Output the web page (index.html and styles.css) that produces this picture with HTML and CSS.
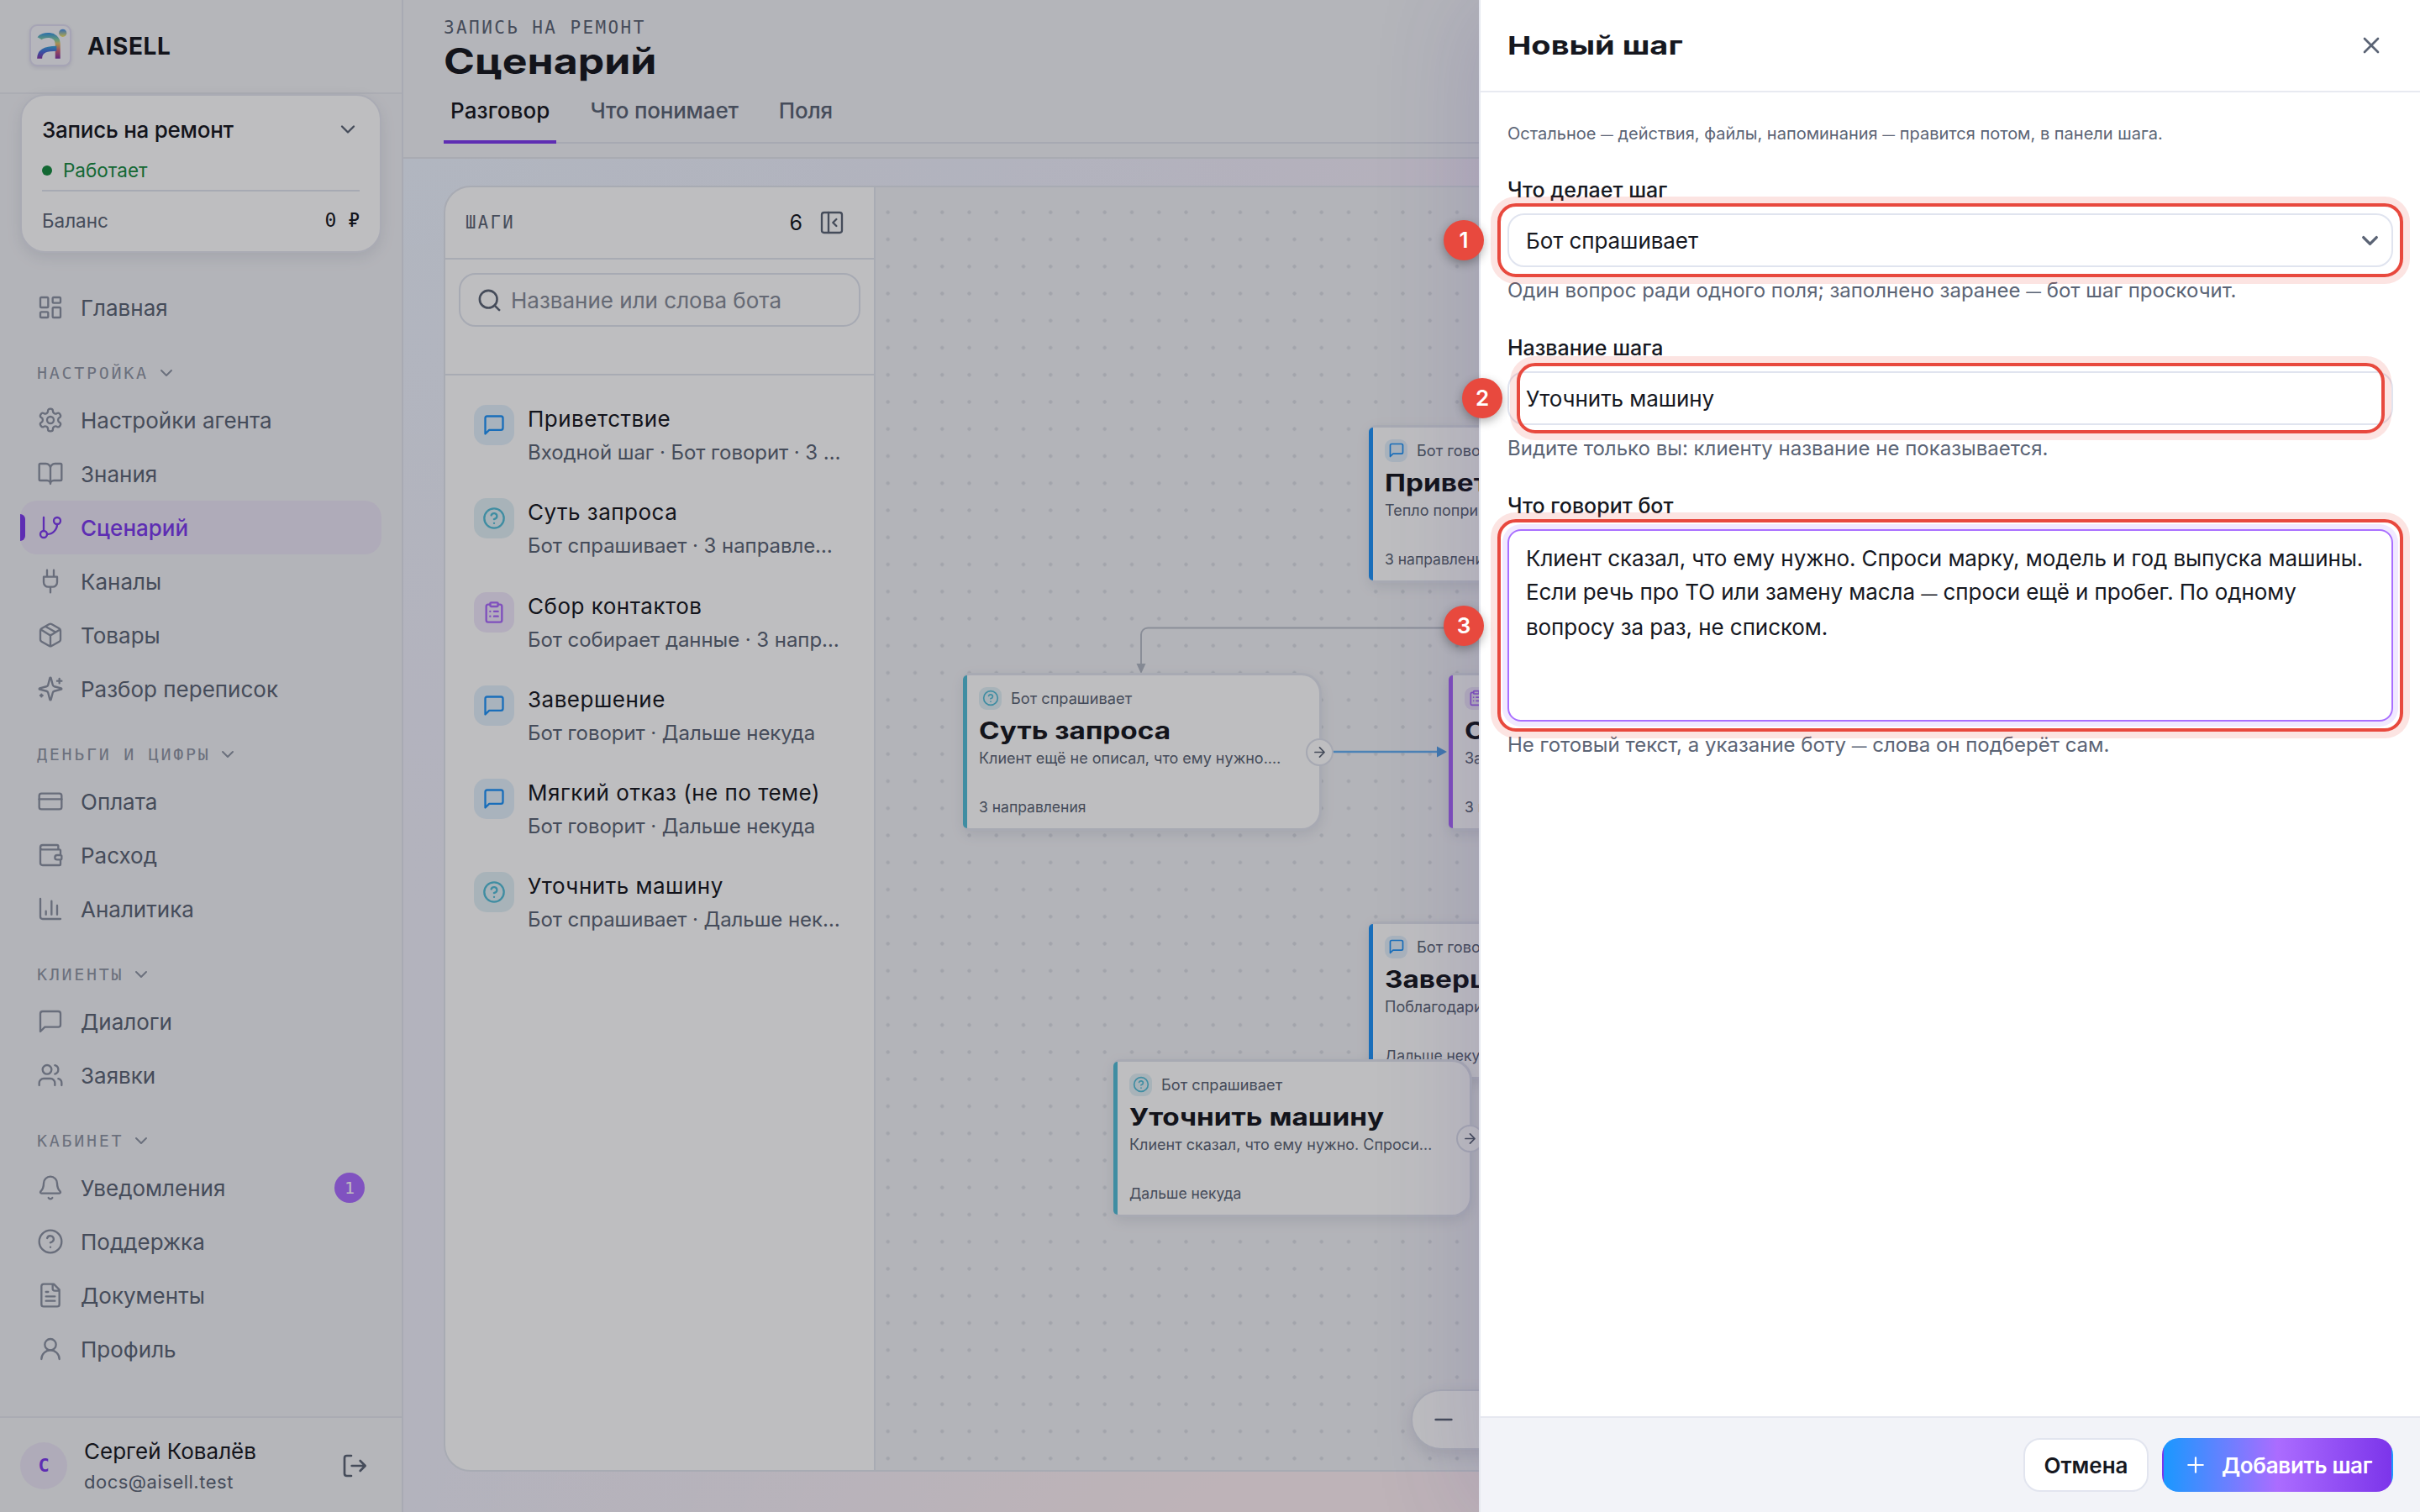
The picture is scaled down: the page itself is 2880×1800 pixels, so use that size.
FILE: index.html
```html
<!DOCTYPE html>
<html lang="ru">
<head>
<meta charset="utf-8">
<title>AISELL — Сценарий</title>
<link rel="stylesheet" href="styles.css">
</head>
<body>
<svg class="defs" width="0" height="0">
  <symbol id="i-home" viewBox="0 0 24 24"><rect x="3" y="3" width="7" height="9" rx="1"/><rect x="14" y="3" width="7" height="5" rx="1"/><rect x="14" y="12" width="7" height="9" rx="1"/><rect x="3" y="16" width="7" height="5" rx="1"/></symbol>
  <symbol id="i-gear" viewBox="0 0 24 24"><path d="M12.22 2h-.44a2 2 0 0 0-2 2v.18a2 2 0 0 1-1 1.73l-.43.25a2 2 0 0 1-2 0l-.15-.08a2 2 0 0 0-2.73.73l-.22.38a2 2 0 0 0 .73 2.73l.15.1a2 2 0 0 1 1 1.72v.51a2 2 0 0 1-1 1.74l-.15.09a2 2 0 0 0-.73 2.73l.22.38a2 2 0 0 0 2.73.73l.15-.08a2 2 0 0 1 2 0l.43.25a2 2 0 0 1 1 1.73V20a2 2 0 0 0 2 2h.44a2 2 0 0 0 2-2v-.18a2 2 0 0 1 1-1.73l.43-.25a2 2 0 0 1 2 0l.15.08a2 2 0 0 0 2.73-.73l.22-.39a2 2 0 0 0-.73-2.73l-.15-.08a2 2 0 0 1-1-1.74v-.5a2 2 0 0 1 1-1.74l.15-.09a2 2 0 0 0 .73-2.73l-.22-.38a2 2 0 0 0-2.73-.73l-.15.08a2 2 0 0 1-2 0l-.43-.25a2 2 0 0 1-1-1.73V4a2 2 0 0 0-2-2z"/><circle cx="12" cy="12" r="3"/></symbol>
  <symbol id="i-book" viewBox="0 0 24 24"><path d="M12 7v14M3 18a1 1 0 0 1-1-1V4a1 1 0 0 1 1-1h5a4 4 0 0 1 4 4 4 4 0 0 1 4-4h5a1 1 0 0 1 1 1v13a1 1 0 0 1-1 1h-6a3 3 0 0 0-3 3 3 3 0 0 0-3-3z"/></symbol>
  <symbol id="i-branch" viewBox="0 0 24 24"><path d="M6 3v12M18 9a9 9 0 0 1-9 9"/><circle cx="18" cy="6" r="3"/><circle cx="6" cy="18" r="3"/></symbol>
  <symbol id="i-plug" viewBox="0 0 24 24"><path d="M12 22v-5M9 8V2M15 8V2M18 8v5a4 4 0 0 1-4 4h-4a4 4 0 0 1-4-4V8Z"/></symbol>
  <symbol id="i-box" viewBox="0 0 24 24"><path d="M11 21.73a2 2 0 0 0 2 0l7-4A2 2 0 0 0 21 16V8a2 2 0 0 0-1-1.73l-7-4a2 2 0 0 0-2 0l-7 4A2 2 0 0 0 3 8v8a2 2 0 0 0 1 1.73zM12 22V12M3.3 7l7.703 4.734a2 2 0 0 0 1.994 0L20.7 7M7.5 4.27l9 5.15"/></symbol>
  <symbol id="i-spark" viewBox="0 0 24 24"><path d="M9.937 15.5A2 2 0 0 0 8.5 14.063l-6.135-1.582a.5.5 0 0 1 0-.962L8.5 9.936A2 2 0 0 0 9.937 8.5l1.582-6.135a.5.5 0 0 1 .963 0L14.063 8.5A2 2 0 0 0 15.5 9.937l6.135 1.581a.5.5 0 0 1 0 .964L15.5 14.063a2 2 0 0 0-1.437 1.437l-1.582 6.135a.5.5 0 0 1-.963 0zM20 3v4M22 5h-4M4 17v2M5 18H3"/></symbol>
  <symbol id="i-card" viewBox="0 0 24 24"><rect x="2" y="5" width="20" height="14" rx="2"/><path d="M2 10h20"/></symbol>
  <symbol id="i-wallet" viewBox="0 0 24 24"><path d="M19 7V4a1 1 0 0 0-1-1H5a2 2 0 0 0 0 4h15a1 1 0 0 1 1 1v4h-3a2 2 0 0 0 0 4h3a1 1 0 0 0 1-1v-2a1 1 0 0 0-1-1M3 5v14a2 2 0 0 0 2 2h15a1 1 0 0 0 1-1v-4"/></symbol>
  <symbol id="i-chart" viewBox="0 0 24 24"><path d="M3 3v16a2 2 0 0 0 2 2h16M18 17V9M13 17V5M8 17v-3"/></symbol>
  <symbol id="i-msg" viewBox="0 0 24 24"><path d="M21 15a2 2 0 0 1-2 2H7l-4 4V5a2 2 0 0 1 2-2h14a2 2 0 0 1 2 2z"/></symbol>
  <symbol id="i-users" viewBox="0 0 24 24"><path d="M16 21v-2a4 4 0 0 0-4-4H6a4 4 0 0 0-4 4v2M22 21v-2a4 4 0 0 0-3-3.87M16 3.13a4 4 0 0 1 0 7.75"/><circle cx="9" cy="7" r="4"/></symbol>
  <symbol id="i-bell" viewBox="0 0 24 24"><path d="M10.268 21a2 2 0 0 0 3.464 0M3.262 15.326A1 1 0 0 0 4 17h16a1 1 0 0 0 .74-1.673C19.41 13.956 18 12.499 18 8A6 6 0 0 0 6 8c0 4.499-1.411 5.956-2.738 7.326"/></symbol>
  <symbol id="i-help" viewBox="0 0 24 24"><circle cx="12" cy="12" r="10"/><path d="M9.09 9a3 3 0 0 1 5.83 1c0 2-3 3-3 3M12 17h.01"/></symbol>
  <symbol id="i-file" viewBox="0 0 24 24"><path d="M15 2H6a2 2 0 0 0-2 2v16a2 2 0 0 0 2 2h12a2 2 0 0 0 2-2V7ZM14 2v4a2 2 0 0 0 2 2h4M10 9H8M16 13H8M16 17H8"/></symbol>
  <symbol id="i-user" viewBox="0 0 24 24"><circle cx="12" cy="8" r="5"/><path d="M20 21a8 8 0 0 0-16 0"/></symbol>
  <symbol id="i-out" viewBox="0 0 24 24"><path d="M9 21H5a2 2 0 0 1-2-2V5a2 2 0 0 1 2-2h4M17 16.500l4.500-4.500-4.500-4.500M21 12H9.500"/></symbol>
  <symbol id="i-clip" viewBox="0 0 24 24"><rect x="8" y="2" width="8" height="4" rx="1"/><path d="M16 4h2a2 2 0 0 1 2 2v14a2 2 0 0 1-2 2H6a2 2 0 0 1-2-2V6a2 2 0 0 1 2-2h2M12 11h4M12 16h4M8 11h.01M8 16h.01"/></symbol>
  <symbol id="i-panel" viewBox="0 0 24 24"><rect x="3" y="3" width="18" height="18" rx="2"/><path d="M9 3v18M16 15l-3-3 3-3"/></symbol>
  <symbol id="i-search" viewBox="0 0 24 24"><circle cx="11" cy="11" r="8"/><path d="M21 21l-4.300-4.300"/></symbol>
  <symbol id="i-down" viewBox="0 0 24 24"><path d="M6 9l6 6 6-6"/></symbol>
  <symbol id="i-right" viewBox="0 0 24 24"><path d="M5 12h14M12 5l7 7-7 7"/></symbol>
  <symbol id="i-x" viewBox="0 0 24 24"><path d="M18 6L6 18M6 6l12 12"/></symbol>
  <symbol id="i-plus" viewBox="0 0 24 24"><path d="M5 12h14M12 5v14"/></symbol>
  <symbol id="i-minus" viewBox="0 0 24 24"><path d="M5 12h14"/></symbol>
</svg>

<div class="app">
  <aside class="sidebar">
    <div class="brand">
      <svg class="logo" viewBox="0 0 50 50">
        <defs><linearGradient id="lg" x1="0" y1="8" x2="0" y2="43" gradientUnits="userSpaceOnUse"><stop offset="0" stop-color="#2f8fe8"/><stop offset=".3" stop-color="#8ccf9a"/><stop offset=".42" stop-color="#e0c26a"/><stop offset=".7" stop-color="#c8607a"/><stop offset="1" stop-color="#7a2fa8"/></linearGradient>
        <linearGradient id="lg2" x1="0" y1="26" x2="0" y2="43" gradientUnits="userSpaceOnUse"><stop offset="0" stop-color="#3aa5d8"/><stop offset=".45" stop-color="#4a68d8"/><stop offset="1" stop-color="#8a2fa0"/></linearGradient>
        <linearGradient id="lg3" x1="0" y1="0" x2="0" y2="1"><stop offset="0" stop-color="#3d8df0"/><stop offset="1" stop-color="#f0e060"/></linearGradient></defs>
        <path d="M11 16C14 11 34 8 34.500 23V42" fill="none" stroke="url(#lg)" stroke-width="6.500"/>
        <path d="M11 42C11 31 21 29 33 29" fill="none" stroke="url(#lg2)" stroke-width="6.500"/>
        <circle cx="41" cy="9" r="5" fill="url(#lg3)"/>
      </svg>
      <span class="brand-name">AISELL</span>
    </div>
    <div class="agent">
      <div class="agent-row"><span class="agent-name">Запись на ремонт</span><svg class="ic agent-chev"><use href="#i-down"/></svg></div>
      <div class="agent-status"><i class="dot"></i><span>Работает</span></div>
      <div class="agent-balance"><span>Баланс</span><b class="mono">0 ₽</b></div>
    </div>
    <nav class="nav">
      <a class="item"><svg class="ic"><use href="#i-home"/></svg><span>Главная</span></a>
      <div class="group">НАСТРОЙКА<svg class="ic"><use href="#i-down"/></svg></div>
      <a class="item"><svg class="ic"><use href="#i-gear"/></svg><span>Настройки агента</span></a>
      <a class="item"><svg class="ic"><use href="#i-book"/></svg><span>Знания</span></a>
      <a class="item active"><svg class="ic"><use href="#i-branch"/></svg><span>Сценарий</span></a>
      <a class="item"><svg class="ic"><use href="#i-plug"/></svg><span>Каналы</span></a>
      <a class="item"><svg class="ic"><use href="#i-box"/></svg><span>Товары</span></a>
      <a class="item"><svg class="ic"><use href="#i-spark"/></svg><span>Разбор переписок</span></a>
      <div class="group">ДЕНЬГИ И ЦИФРЫ<svg class="ic"><use href="#i-down"/></svg></div>
      <a class="item"><svg class="ic"><use href="#i-card"/></svg><span>Оплата</span></a>
      <a class="item"><svg class="ic"><use href="#i-wallet"/></svg><span>Расход</span></a>
      <a class="item"><svg class="ic"><use href="#i-chart"/></svg><span>Аналитика</span></a>
      <div class="group">КЛИЕНТЫ<svg class="ic"><use href="#i-down"/></svg></div>
      <a class="item"><svg class="ic"><use href="#i-msg"/></svg><span>Диалоги</span></a>
      <a class="item"><svg class="ic"><use href="#i-users"/></svg><span>Заявки</span></a>
      <div class="group">КАБИНЕТ<svg class="ic"><use href="#i-down"/></svg></div>
      <a class="item"><svg class="ic"><use href="#i-bell"/></svg><span>Уведомления</span><em class="count">1</em></a>
      <a class="item"><svg class="ic"><use href="#i-help"/></svg><span>Поддержка</span></a>
      <a class="item"><svg class="ic"><use href="#i-file"/></svg><span>Документы</span></a>
      <a class="item"><svg class="ic"><use href="#i-user"/></svg><span>Профиль</span></a>
    </nav>
    <div class="account">
      <span class="avatar">С</span>
      <div class="who"><div class="who-name">Сергей Ковалёв</div><div class="who-mail">docs@aisell.test</div></div>
      <svg class="ic out"><use href="#i-out"/></svg>
    </div>
  </aside>

  <main class="main">
    <header class="head">
      <div class="crumb">ЗАПИСЬ НА РЕМОНТ</div>
      <h1 class="title"><span class="wide">Сценарий</span></h1>
      <div class="tabs"><a class="tab on">Разговор</a><a class="tab">Что понимает</a><a class="tab">Поля</a></div>
    </header>
    <section class="board">
      <div class="steps">
        <div class="steps-head"><span class="steps-title">ШАГИ</span><b class="steps-count">6</b><svg class="ic"><use href="#i-panel"/></svg></div>
        <div class="steps-search"><div class="search"><svg class="ic"><use href="#i-search"/></svg><span>Название или слова бота</span></div></div>
        <div class="list">
          <div class="step"><i class="tile say"><svg class="ic"><use href="#i-msg"/></svg></i><div><div class="step-name">Приветствие</div><div class="step-sub">Входной шаг · Бот говорит · 3 …</div></div></div>
          <div class="step"><i class="tile ask"><svg class="ic"><use href="#i-help"/></svg></i><div><div class="step-name">Суть запроса</div><div class="step-sub">Бот спрашивает · 3 направле…</div></div></div>
          <div class="step"><i class="tile form"><svg class="ic"><use href="#i-clip"/></svg></i><div><div class="step-name">Сбор контактов</div><div class="step-sub">Бот собирает данные · 3 напр…</div></div></div>
          <div class="step"><i class="tile say"><svg class="ic"><use href="#i-msg"/></svg></i><div><div class="step-name">Завершение</div><div class="step-sub">Бот говорит · Дальше некуда</div></div></div>
          <div class="step"><i class="tile say"><svg class="ic"><use href="#i-msg"/></svg></i><div><div class="step-name">Мягкий отказ (не по теме)</div><div class="step-sub">Бот говорит · Дальше некуда</div></div></div>
          <div class="step"><i class="tile ask"><svg class="ic"><use href="#i-help"/></svg></i><div><div class="step-name">Уточнить машину</div><div class="step-sub">Бот спрашивает · Дальше нек…</div></div></div>
        </div>
      </div>
      <div class="canvas">
        <svg class="edges" viewBox="0 0 800 1527">
          <path d="M720 524.500H324a8 8 0 0 0-8 8V568" fill="none" stroke="#b9bec9" stroke-width="2"/>
          <path d="M310.500 567h11l-5.500 12z" fill="#b2b8c4"/>
          <path d="M544 672h126" fill="none" stroke="#64aff2" stroke-width="2.500"/>
          <path d="M668 665.500v13l12-6.500z" fill="#559fe8"/>
        </svg>
        <article class="node say n1"><div class="node-kind"><i class="tile say"><svg class="ic"><use href="#i-msg"/></svg></i>Бот говорит</div><div class="node-name"><span class="wide">Приветствие</span></div><div class="node-text">Тепло поприветствуй</div><div class="node-foot">3 направления</div></article>
        <article class="node form n3"><div class="node-kind"><i class="tile form"><svg class="ic"><use href="#i-clip"/></svg></i>Бот</div><div class="node-name"><span class="wide">Сбор</span></div><div class="node-text">Запроси</div><div class="node-foot">3 пути</div></article>
        <article class="node ask n2"><div class="node-kind"><i class="tile ask"><svg class="ic"><use href="#i-help"/></svg></i>Бот спрашивает</div><div class="node-name"><span class="wide">Суть запроса</span></div><div class="node-text">Клиент ещё не описал, что ему нужно.…</div><div class="node-foot">3 направления</div><i class="port"><svg class="ic"><use href="#i-right"/></svg></i></article>
        <article class="node say n4"><div class="node-kind"><i class="tile say"><svg class="ic"><use href="#i-msg"/></svg></i>Бот говорит</div><div class="node-name"><span class="wide">Завершение</span></div><div class="node-text">Поблагодари клиента…</div><div class="node-foot">Дальше некуда</div></article>
        <article class="node ask n5"><div class="node-kind"><i class="tile ask"><svg class="ic"><use href="#i-help"/></svg></i>Бот спрашивает</div><div class="node-name"><span class="wide">Уточнить машину</span></div><div class="node-text">Клиент сказал, что ему нужно. Спроси…</div><div class="node-foot">Дальше некуда</div><i class="port"><svg class="ic"><use href="#i-right"/></svg></i></article>
        <div class="zoombar"><svg class="ic"><use href="#i-minus"/></svg></div>
      </div>
    </section>
  </main>
</div>

<div class="scrim"></div>

<div class="drawer">
  <div class="d-head"><h2 class="d-title"><span class="wide">Новый шаг</span></h2><svg class="ic"><use href="#i-x"/></svg></div>
  <div class="d-body">
    <p class="note">Остальное <span class="dash">—</span> действия, файлы, напоминания <span class="dash">—</span> правится потом, в панели шага.</p>
    <div class="field">
      <label class="label">Что делает шаг</label>
      <div class="control select"><span>Бот спрашивает</span><svg class="ic"><use href="#i-down"/></svg><i class="mark"></i><i class="num">1</i></div>
      <p class="hint">Один вопрос ради одного поля; заполнено заранее <span class="dash">—</span> бот шаг проскочит.</p>
    </div>
    <div class="field">
      <label class="label">Название шага</label>
      <div class="control"><span>Уточнить машину</span><i class="mark inner"></i><i class="num second">2</i></div>
      <p class="hint">Видите только вы: клиенту название не показывается.</p>
    </div>
    <div class="field">
      <label class="label">Что говорит бот</label>
      <div class="control area"><span>Клиент сказал, что ему нужно. Спроси марку, модель и год выпуска машины.<br>Если речь про ТО или замену масла <span class="dash">—</span> спроси ещё и пробег. По одному<br>вопросу за раз, не списком.</span><i class="mark"></i><i class="num third">3</i></div>
      <p class="hint">Не готовый текст, а указание боту <span class="dash">—</span> слова он подберёт сам.</p>
    </div>
  </div>
  <div class="d-foot"><a class="btn">Отмена</a><a class="btn primary"><svg class="ic"><use href="#i-plus"/></svg><span>Добавить шаг</span></a></div>
</div>
</body>
</html>
```
FILE: styles.css
```css
* { box-sizing: border-box; }
body { margin: 0; width: 2880px; height: 1800px; overflow: hidden; position: relative; font-family: Inter, "Noto Sans", sans-serif; font-size: 26px; color: #16181f; background: #f1f2f6; }
h1, h2, p { margin: 0; font-weight: inherit; }
i, em { font-style: normal; }
.defs { position: absolute; }
.ic { width: 32px; height: 32px; flex: none; fill: none; stroke: currentColor; stroke-width: 1.75; stroke-linecap: round; stroke-linejoin: round; }
.mono, .group, .crumb, .steps-title, .count, .avatar { font-family: "DejaVu Sans Mono", monospace; }
.wide { display: inline-block; transform-origin: 0 50%; transform: scaleX(1.19); white-space: nowrap; }
.dash { font-size: .74em; }

.app { display: flex; height: 1800px; }

/* Sidebar */
.sidebar { width: 480px; flex: none; display: flex; flex-direction: column; background: #f1f2f6; border-right: 2px solid #e2e4ed; }
.brand { height: 112px; flex: none; border-bottom: 2px solid #e6e8ee; display: flex; align-items: center; gap: 19px; padding: 0 0 2px 35px; background: #f3f4f7; }
.logo { width: 50px; height: 50px; border: 2px solid #dedcf0; border-radius: 9px; background: #f4f4fa; box-shadow: 0 2px 4px #dcdce8; }
.brand-name { font-size: 28px; font-weight: 700; letter-spacing: .6px; line-height: 40px; padding-top: 2px; }
.agent { margin: 0 24px; height: 189px; flex: none; border: 2px solid #e4e6ef; border-radius: 30px; background: #fff; padding: 22px 24px; box-shadow: 0 6px 18px rgba(40, 45, 80, .1); }
.agent-row { height: 36px; display: flex; align-items: center; justify-content: space-between; font-weight: 500; letter-spacing: -.25px; }
.agent-chev { width: 28px; height: 28px; color: #5b6475; stroke-width: 2; }
.agent-status { margin-top: 17px; height: 39px; padding-bottom: 10px; border-bottom: 2px solid #e0e4ee; display: flex; align-items: center; gap: 13px; color: #168a3f; font-size: 22.5px; }
.dot { width: 12px; height: 12px; border-radius: 50%; background: #168a3f; }
.agent-balance { margin-top: 19px; height: 30px; display: flex; align-items: center; justify-content: space-between; color: #5b6475; font-size: 22.5px; }
.agent-balance b { font-weight: 400; color: #16181f; font-size: 23px; }
.nav { margin-top: 33px; padding: 0 24px; flex: 1; }
.item { position: relative; height: 64px; display: flex; align-items: center; padding: 0 20px; gap: 20px; border-radius: 20px; color: #5b6475; }
.item .ic { color: #8a91a1; }
.item.active { background: #ebe6f6; color: #7c3aed; font-weight: 500; }
.item.active .ic { color: #7c3aed; }
.item.active::before { content: ""; position: absolute; left: 0; top: 16px; width: 6px; height: 32px; border-radius: 0 6px 6px 0; background: #7c3aed; }
.count { margin-left: auto; width: 36px; height: 36px; border-radius: 50%; background: #ab6cff; color: #fff; font-size: 20px; line-height: 36px; text-align: center; }
.group { height: 70px; padding: 22px 0 0 20px; display: flex; align-items: center; gap: 9px; font-size: 20px; letter-spacing: 2.7px; color: #8e95a4; }
.group .ic { width: 24px; height: 24px; stroke-width: 2; }
.account { height: 114px; flex: none; border-top: 2px solid #e4e6ed; background: #f3f4f7; display: flex; align-items: center; padding: 1px 40px 0 24px; }
.avatar { width: 56px; height: 56px; border-radius: 50%; background: #ebe6f6; color: #7c3aed; font-size: 22px; font-weight: 700; text-align: center; line-height: 56px; }
.who { margin-left: 20px; flex: 1; }
.who-name { line-height: 38px; }
.who-mail { line-height: 34px; font-size: 22px; letter-spacing: .5px; color: #5b6475; }
.out { color: #5b6475; stroke-width: 2; }

/* Main column */
.main { flex: 1; display: flex; flex-direction: column; background: radial-gradient(1300px 620px at 54% 104%, #fff1f4 30%, rgba(255, 241, 244, 0) 100%), radial-gradient(1000px 900px at 0 10%, #eef4ff, rgba(238, 244, 255, 0)), linear-gradient(90deg, #f1f0fb 0, #efeffc 28%, #f5edf9 60%); }
.head { height: 189px; flex: none; background: #f2f3f7; border-bottom: 2px solid #e3e5ec; padding: 17px 48px 0; }
.crumb { height: 33px; line-height: 32px; font-size: 21px; letter-spacing: 2.4px; color: #5b6475; }
.title { height: 46px; line-height: 46px; font-size: 42px; font-weight: 700; }
.tabs { margin-top: 12px; height: 63px; border-bottom: 2px solid #e0e3ec; display: flex; gap: 32px; }
.tab { height: 63px; padding: 7px 8px 0; line-height: 34px; font-weight: 500; color: #5b6475; letter-spacing: -.2px; }
.tab.on { color: #16181f; border-bottom: 4px solid #7c3aed; letter-spacing: .1px; }
.board { margin: 32px 0 48px 48px; flex: 1; display: flex; border: 2px solid #e2e5ee; border-radius: 32px; overflow: hidden; background: #fff; }
.steps { width: 512px; flex: none; border-right: 2px solid #e2e5ee; }
.steps-head { height: 86px; display: flex; align-items: center; padding: 0 34px 0 24px; border-bottom: 2px solid #e2e5ee; }
.steps-title { flex: 1; font-size: 20.5px; letter-spacing: 2.4px; color: #5b6475; }
.steps-count { font-weight: 400; font-size: 25px; margin-right: 19px; }
.steps-head .ic { color: #5b6475; }
.steps-search { height: 138px; padding: 16px; border-bottom: 2px solid #e2e5ee; }
.search { height: 64px; border: 2px solid #e0e4ee; border-radius: 20px; display: flex; align-items: center; gap: 10px; padding: 0 19px; color: #868b98; }
.search .ic { width: 31px; height: 31px; color: #5b6475; stroke-width: 2; }
.list { padding: 35px 34px 0; }
.step { height: 111.300px; display: flex; gap: 16px; }
.tile { width: 48px; height: 48px; flex: none; border-radius: 15px; display: flex; align-items: center; justify-content: center; }
.tile .ic { width: 28px; height: 28px; stroke-width: 2; }
.say .ic { color: #1f93f7; } .ask .ic { color: #53bcd6; } .form .ic { color: #a968fb; }
.tile.say { background: #e3f0fb; } .tile.ask { background: #e2f1f6; } .tile.form { background: #f0e8fb; }
.step-name { line-height: 38px; margin-top: -2px; white-space: nowrap; letter-spacing: .5px; }
.step-sub { line-height: 38px; margin-top: 2px; font-size: 24px; letter-spacing: -.06px; color: #5b6475; white-space: nowrap; }

/* Flow canvas */
.canvas { flex: 1; position: relative; overflow: hidden; background: radial-gradient(circle at center, #d9dce3 0 1.8px, transparent 2.500px) -1.400px 13.600px / 32.250px 32.250px, #f1f2f6; }
.edges { position: absolute; left: 0; top: 0; width: 800px; height: 1527px; }
.node { position: absolute; width: 427px; height: 188px; border: 3px solid #e2e4ee; border-left: 0; border-radius: 8px 24px 24px 8px; background: #fff; padding: 13px 19px 0; box-shadow: 0 5px 16px rgba(40, 45, 80, .1); white-space: nowrap; }
.node::before { content: ""; position: absolute; left: 0; top: 0; bottom: 0; width: 5px; border-radius: 5px 0 0 5px; background: currentColor; }
.node.say { color: #1f93f7; } .node.ask { color: #53bcd6; } .node.form { color: #a968fb; }
.node .tile { width: 27px; height: 27px; border-radius: 9px; }
.node .tile .ic { width: 20px; height: 20px; }
.node-kind { height: 28px; display: flex; align-items: center; gap: 11px; font-size: 18.2px; color: #5b6475; }
.node-name { margin-top: 5px; height: 40px; line-height: 40px; font-size: 28px; font-weight: 700; color: #16181f; }
.node-text { height: 26px; line-height: 26px; font-size: 18px; color: #5b6475; }
.node-foot { margin-top: 33px; line-height: 24px; font-size: 17.5px; color: #5b6475; }
.n1 { left: 587px; top: 283px; } .n2 { left: 104px; top: 578px; } .n3 { left: 682px; top: 578px; } .n4 { left: 587px; top: 874px; } .n5 { left: 283px; top: 1038px; }
.port { position: absolute; right: -17px; top: 75px; width: 33px; height: 33px; border-radius: 50%; border: 2.500px solid #dfe2ec; background: #fff; display: flex; align-items: center; justify-content: center; }
.port .ic { width: 19px; height: 19px; color: #5b6475; stroke-width: 2.2; }
.zoombar { position: absolute; left: 637px; top: 1431px; width: 280px; height: 72px; border: 2px solid #e0e3ec; border-radius: 36px; background: #fff; display: flex; align-items: center; padding-left: 21px; box-shadow: 0 6px 20px rgba(40, 45, 80, .12); }
.zoombar .ic { color: #5b6475; stroke-width: 2; }

.scrim { position: absolute; inset: 0; background: rgba(11, 13, 20, .265); }

/* Drawer */
.drawer { position: absolute; right: 0; top: 0; width: 1120px; height: 1800px; border-left: 2px solid #e6e8f0; background: #fff; display: flex; flex-direction: column; box-shadow: -10px 0 110px rgba(70, 50, 140, .16); }
.d-head { height: 110px; flex: none; border-bottom: 2px solid #e8eaf1; display: flex; align-items: center; justify-content: space-between; padding: 0 42px 0 32px; }
.d-title { font-size: 30px; font-weight: 700; line-height: 40px; }
.d-title .wide { transform: scaleX(1.265); }
.d-head .ic { color: #5b6475; stroke-width: 2; }
.d-body { flex: 1; padding: 32px 32px 0; }
.note { line-height: 34px; font-size: 20px; color: #5b6475; height: 66px; }
.field { margin-bottom: 22px; }
.label { display: block; height: 46px; line-height: 36px; font-size: 25px; font-weight: 500; }
.control { position: relative; height: 64px; border: 2px solid #e0e4ef; border-radius: 20px; display: flex; align-items: center; padding: 0 10px 0 20px; letter-spacing: -.08px; white-space: nowrap; }
.select { justify-content: space-between; }
.select .ic { width: 31px; height: 31px; color: #5b6475; stroke-width: 2.6; }
.area { height: 229px; align-items: flex-start; padding-top: 13px; line-height: 40px; border-color: #a96fff; border-radius: 16px; box-shadow: 0 0 0 6px #f1e9ff; }
.hint { line-height: 36px; padding-top: 10px; height: 56px; font-size: 24px; color: #5b6475; }
.mark { position: absolute; inset: -14px; border: 4px solid #e8493e; border-radius: 22px; box-shadow: 0 0 0 8px rgba(232, 73, 62, .15); }
.mark.inner { inset: -12px 8px -12px 9px; }
.num { position: absolute; left: -78px; top: 50%; margin-top: -24px; width: 48px; height: 48px; border-radius: 50%; background: #e8493e; color: #fff; font-size: 26px; font-weight: 600; line-height: 48px; text-align: center; box-shadow: 0 4px 12px rgba(0, 0, 0, .3); }
.num.second { left: -56px; }
.d-foot { height: 114px; flex: none; border-top: 2px solid #e6e8f0; background: #f2f3f8; display: flex; justify-content: flex-end; gap: 16px; padding: 24px 32px 0 0; }
.btn { width: 149px; height: 64px; border: 2px solid #e2e5ef; border-radius: 20px; background: #fff; font-weight: 600; display: flex; align-items: center; justify-content: center; }
.btn.primary { width: 275px; border-color: transparent; background: linear-gradient(90deg, #1a98ff, #ab6cff 50%, #7c35ea); color: #fff; gap: 16px; letter-spacing: -.3px; }
.btn .ic { width: 30px; height: 30px; }
```
